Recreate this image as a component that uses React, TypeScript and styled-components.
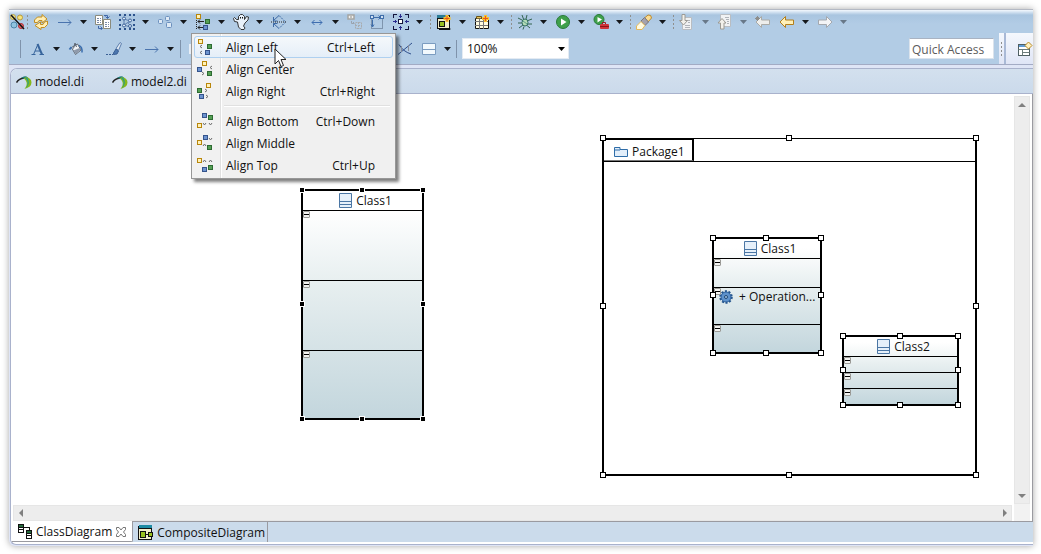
import React, { ReactNode } from 'react';
import styled, { createGlobalStyle, css } from 'styled-components';

const GlobalStyle = createGlobalStyle`
  *, *::before, *::after { box-sizing: border-box; }
  body {
    margin: 0;
    background: #fff;
    color: #111;
    font: 12px/16px "Open Sans", "Noto Sans", sans-serif;
  }
  button, input, select { font: inherit; color: inherit; }
`;

/* ---------- window frame ---------- */

const Page = styled.div`
  display: flex;
  min-height: 100vh;
  padding: 9px 8px 8px 9px;
`;

const Window = styled.main`
  flex: 1;
  min-width: 0;
  display: flex;
  flex-direction: column;
  background: #dfe5f6;
  border-top: 1px solid #b4b9c4;
  border-radius: 0 0 0 6px;
  box-shadow: 0 0 7px rgba(0, 0, 0, 0.35);
`;

/* ---------- toolbars ---------- */

const Toolbars = styled.header`
  background: linear-gradient(#f4f8fc 0, #e4eef8 1px, #a9c5e0 5px, #b2cce5 14px, #b2cce5 100%);
  border-bottom: 1px solid #a3abc4;
`;

const ToolRow = styled.div<{ $height: number }>`
  display: flex;
  align-items: center;
  height: ${p => p.$height}px;
`;

const ToolButton = styled.button<{ $width?: number; $spaced?: boolean }>`
  display: flex;
  flex: none;
  align-items: center;
  justify-content: center;
  width: ${p => p.$width ?? 22}px;
  height: 22px;
  margin: 0;
  margin-right: ${p => (p.$spaced ? 2 : 0)}px;
  padding: 0;
  border: 0;
  background: none;
  overflow: hidden;
`;

const DropButton = styled(ToolButton)`
  width: 16px;
  padding-right: 2px;
`;

const MenuAnchor = styled.div`
  position: relative;
  display: flex;
  flex: none;
`;

const Grip = styled.span`
  flex: none;
  width: 5px;
  height: 14px;
  background: repeating-linear-gradient(#8f8f8d 0 2px, transparent 2px 4px) 2px 0 / 1px 100% no-repeat;
`;

const Bar = styled.span<{ $before: number; $after: number }>`
  flex: none;
  width: 1px;
  height: 18px;
  margin: 0 ${p => p.$after}px 0 ${p => p.$before}px;
  background: #7f93ab;
`;

const Spacer = styled.span`
  flex: 1;
`;

const HiddenTools = styled.span`
  flex: none;
  width: 205px;
  height: 10px;
  margin-left: 8px;
  border-left: 3px solid #e8eef6;
`;

const ZoomBox = styled.label`
  position: relative;
  display: flex;
  flex: none;
  width: 107px;
  height: 21px;
  background: #fff;

  svg {
    position: absolute;
    right: 4px;
    top: 9px;
    pointer-events: none;
  }
`;

const ZoomSelect = styled.select`
  appearance: none;
  width: 100%;
  padding: 1px 4px 0;
  border: 1px solid #e4ebf3;
  border-radius: 0;
  background: none;
`;

const QuickAccess = styled.input`
  width: 85px;
  height: 21px;
  margin-right: 5px;
  padding: 1px 2px 0;
  border: 1px solid #dbe3ec;
  border-top-color: #a9b3c2;
  background: #fff;

  &::placeholder {
    color: #5c5c5c;
    opacity: 1;
  }
`;

const Perspective = styled.div`
  display: flex;
  align-items: center;
  align-self: stretch;
  width: 34px;
  background: linear-gradient(#f5f8fd, #dfe5f6);
  overflow: hidden;
`;

const PerspectiveEdge = styled.span`
  flex: none;
  align-self: stretch;
  width: 2px;
  margin-right: 8px;
  background: #a9b9d6;
`;

/* ---------- menu ---------- */

const Menu = styled.div`
  position: absolute;
  z-index: 5;
  left: -1px;
  top: 22px;
  width: 205px;
  padding: 2px;
  border: 1px solid #979797;
  background: linear-gradient(90deg, #f1f1f1 28px, #e0e0e0 28px 29px, #fff 29px 30px, #f0f0f0 30px);
  box-shadow: 3px 3px 3px rgba(0, 0, 0, 0.5);
`;

const MenuItem = styled.button<{ $active?: boolean }>`
  display: flex;
  align-items: center;
  width: 100%;
  height: 22px;
  padding: 0 17px 0 2px;
  border: 1px solid transparent;
  border-radius: 3px;
  background: none;
  text-align: left;
  white-space: nowrap;

  ${p =>
    p.$active &&
    css`
      border-color: #aed0f0;
      background: linear-gradient(rgba(246, 250, 254, 0.8), rgba(226, 238, 250, 0.8));
    `}
`;

const MenuText = styled.span`
  padding-top: 2px;
`;

const MenuLabel = styled(MenuText)`
  flex: 1;
  margin-left: 13px;
`;

const MenuRule = styled.hr`
  height: 2px;
  margin: 3px 3px 3px 30px;
  border: 0;
  border-top: 1px solid #e0e0e0;
  background: #fff;
`;

const Pointer = styled.svg`
  position: absolute;
  left: 82px;
  top: 14px;
`;

/* ---------- editor ---------- */

const Editor = styled.section`
  flex: 1;
  display: flex;
  flex-direction: column;
  margin: 3px 0 1px 1px;
  border: 1px solid #a9b2cc;
  border-right: 0;
  border-radius: 7px 0 0 6px;
  background: #fff;
  overflow: hidden;
`;

const FileTabs = styled.nav`
  display: flex;
  gap: 28px;
  height: 25px;
  padding-left: 5px;
  background: linear-gradient(#d3e0ee, #cbdaeb);
  border-bottom: 1px solid #a9b2cc;
`;

const FileTab = styled.button`
  display: flex;
  align-items: center;
  gap: 3px;
  padding: 2px 0 0;
  border: 0;
  background: none;
`;

const Surface = styled.div`
  flex: 1;
  display: grid;
  grid-template: 1fr 17px / 1fr 16px;
  padding-right: 2px;
  border-right: 1px solid #9a9aa0;
`;

const Canvas = styled.div`
  position: relative;
  min-height: 400px;
`;

const ScrollTrack = styled.div<{ $vertical?: boolean }>`
  display: flex;
  flex-direction: ${p => (p.$vertical ? 'column' : 'row')};
  align-items: center;
  justify-content: space-between;
  margin: ${p => (p.$vertical ? '2px 0 0' : '1px 2px 0 2px')};
  padding: ${p => (p.$vertical ? '4px 0 3px' : '0 2px 0 3px')};
  border: 1px solid #e6e6e6;
  background: #ededed;
`;

const ScrollCorner = styled.div`
  background: #f2f2f2;
`;

const DiagramTabs = styled.nav`
  display: flex;
  height: 21px;
  margin-bottom: 2px;
  background: #cbdbeb;
  border-top: 1px solid #9a9aa0;
`;

const DiagramTab = styled.button<{ $active?: boolean }>`
  display: flex;
  align-items: center;
  gap: ${p => (p.$active ? 3 : 4)}px;
  margin-top: ${p => (p.$active ? -1 : 0)}px;
  padding: 1px ${p => (p.$active ? 5 : 2)}px 0 ${p => (p.$active ? 6 : 5)}px;
  border: 0;
  border-right: 1px solid #9a9aa0;
  border-bottom: ${p => (p.$active ? '1px solid #9a9aa0' : '0')};
  border-radius: 0 0 ${p => (p.$active ? '2px 0' : '0 0')};
  background: ${p => (p.$active ? '#fff' : 'none')};
`;

/* ---------- diagram nodes ---------- */

type Box = { x: number; y: number; w: number; h: number };

const NodeBox = styled.article<{ $box: Box; $plain?: boolean }>`
  position: absolute;
  left: ${p => p.$box.x}px;
  top: ${p => p.$box.y}px;
  width: ${p => p.$box.w}px;
  height: ${p => p.$box.h}px;
  display: flex;
  flex-direction: column;
  border: 2px solid #000;
  border-top-width: ${p => (p.$plain ? 1 : 2)}px;
  background: ${p => (p.$plain ? 'none' : 'linear-gradient(#fff 8%, #e6eeef 42%, #c3d6dd)')};
`;

const NodeTitle = styled.h2`
  display: flex;
  flex: none;
  align-items: center;
  justify-content: center;
  gap: 4px;
  height: 19px;
  margin: 0;
  padding-left: 6px;
  font-size: 12px;
  font-weight: 400;
`;

const Compartment = styled.div<{ $grow: number }>`
  position: relative;
  display: flex;
  flex: ${p => p.$grow} 1 0;
  align-items: flex-start;
  min-height: 0;
  border-top: 1px solid #000;
`;

const Collapse = styled.button`
  position: absolute;
  left: 0;
  top: 0;
  width: 7px;
  height: 7px;
  padding: 0;
  border: 1px solid #9a9a96;
  border-radius: 1px;
  background: linear-gradient(#000, #000) 0 2px / 5px 1px no-repeat #f2f2f0;
`;

const Operation = styled.div`
  display: flex;
  align-items: center;
  gap: 6px;
  padding: 1px 0 0 5px;
  white-space: nowrap;
`;

const PackageHead = styled.div`
  height: 23px;
  border-bottom: 1px solid #000;
`;

const PackageTab = styled.div`
  display: flex;
  align-items: center;
  gap: 4px;
  width: 90px;
  height: 22px;
  padding: 4px 0 0 10px;
  border: solid #000;
  border-width: 1px 2px 1px 0;
  border-bottom-color: #777;
`;

const Handle = styled.i<{ $h: number; $v: number; $solid?: boolean }>`
  position: absolute;
  z-index: 1;
  left: ${p => (p.$h === 0 ? '-1px' : p.$h === 1 ? 'calc(50% - 1px)' : 'calc(100% + 1px)')};
  top: ${p => (p.$v === 0 ? '-1px' : p.$v === 1 ? 'calc(50% - 1px)' : 'calc(100% + 1px)')};
  width: 6px;
  height: 6px;
  margin: -3px;
  border: 1px solid ${p => (p.$solid ? '#fff' : '#000')};
  background: ${p => (p.$solid ? '#000' : '#fff')};
`;

const spots = [[0, 0], [1, 0], [2, 0], [0, 1], [2, 1], [0, 2], [1, 2], [2, 2]];

const Handles = ({ solid }: { solid?: boolean }) => (
  <>
    {spots.map(([h, v]) => (
      <Handle key={`${h}${v}`} $h={h} $v={v} $solid={solid} />
    ))}
  </>
);

/* ---------- icons ---------- */

const Drawing = styled.svg`
  flex: none;
`;

const Icon = ({ w = 16, h = 16, crisp, children }: { w?: number; h?: number; crisp?: boolean; children: ReactNode }) => (
  <Drawing
    width={w}
    height={h}
    viewBox={`0 0 ${w} ${h}`}
    fill="none"
    shapeRendering={crisp ? 'crispEdges' : undefined}
    aria-hidden="true"
  >
    {children}
  </Drawing>
);

const tones: Record<string, [string, string]> = {
  y: ['#b8860b', '#fff1b8'],
  g: ['#2d6b33', '#55a054'],
  b: ['#35548c', '#6c93cf'],
};

const Square = ({ x, y, tone }: { x: number; y: number; tone: string }) => (
  <rect x={x + 0.5} y={y + 0.5} width="4" height="4" stroke={tones[tone][0]} fill={tones[tone][1]} />
);

const chevrons: Record<string, string> = {
  l: 'l-2 1.5 l2 1.5',
  r: 'l2 1.5 l-2 1.5',
  d: 'l1.5 2 l1.5 -2',
  u: 'l1.5 -2 l1.5 2',
};

type AlignSpec = { squares: [string, number, number][]; marks: [string, number, number][] };

const AlignIcon = ({ squares, marks }: AlignSpec) => (
  <Icon>
    {squares.map(([tone, x, y]) => (
      <Square key={tone} tone={tone} x={x} y={y} />
    ))}
    {marks.map(([dir, x, y], i) => (
      <path key={i} d={`M${x} ${y}${chevrons[dir]}`} stroke="#6d6d6d" />
    ))}
  </Icon>
);

const Arrow = ({ color = '#15181c' }: { color?: string }) => (
  <Icon w={7} h={4}>
    <path d="M0 0h7L3.5 4z" fill={color} />
  </Icon>
);

const FilterIcon = () => (
  <Icon>
    <circle cx="4" cy="3" r="2.500" fill="#efe28c" stroke="#b9a64c" />
    <circle cx="11" cy="3.500" r="2.500" fill="#f6e47a" stroke="#b99b3c" />
    <circle cx="5" cy="11" r="3" fill="#8fc3df" stroke="#4c84a8" />
    <circle cx="12" cy="12" r="2.500" fill="#e4646a" stroke="#b03038" />
    <path d="M2 1l13 14" stroke="#111" strokeWidth="1.500" />
  </Icon>
);

const SyncIcon = () => (
  <Icon>
    <path d="M1.500 8.500V6l3-3H9V.500L14 5l-5 4V6.500H6L4.500 8.500z" fill="#ffeeb4" stroke="#c28e1e" strokeLinejoin="round" />
    <path d="M14.500 7v3.500l-3 3H8v2L2 11.500 7.500 8v2.500H10L11.500 8z" fill="#ffeeb4" stroke="#c28e1e" strokeLinejoin="round" />
  </Icon>
);

const LineArrowIcon = () => (
  <Icon>
    <path d="M1 8.500h13M11 5.500l3 3-3 3" stroke="#4a74ae" />
  </Icon>
);

const PagesIcon = () => (
  <Icon>
    <path d="M.5 1.500h7v9h-7zM8.500 5.500h7v9h-7z" fill="#fff" stroke="#8b8b7c" />
    <path d="M2 4.500h4M2 6.500h4M2 8.500h4M10 8.500h4M10 10.500h4M10 12.500h4" stroke="#7a8ba8" strokeDasharray="2 1" />
    <path d="M9 1.500h3.500V4M10.500 2.500l2 2 2-2M3.500 12v2.500H7M5.500 12.500l2 2-2 1.500" stroke="#3f66a8" />
  </Icon>
);

const NetworkIcon = () => (
  <Icon>
    <path d="M0 0h2v2H0zM5 0h2v2H5zM10 0h2v2h-2zM14 0h2v2h-2zM0 14h2v2H0zM5 14h2v2H5zM10 14h2v2h-2zM14 14h2v2h-2zM0 5h2v2H0zM0 10h2v2H0zM14 5h2v2h-2zM14 10h2v2h-2z" fill="#2c528c" />
    <path d="M5 5l6 2-6 4 6 2M5 5v6M11 7l-2 3" stroke="#5d7fae" />
    <circle cx="5" cy="4.500" r="1.500" fill="#dce8f5" stroke="#3e659c" />
    <circle cx="11" cy="6.500" r="1.500" fill="#dce8f5" stroke="#3e659c" />
    <circle cx="5" cy="11.500" r="1.500" fill="#dce8f5" stroke="#3e659c" />
    <circle cx="11" cy="12" r="1.500" fill="#dce8f5" stroke="#3e659c" />
  </Icon>
);

const ShapesIcon = () => (
  <Icon>
    <rect x="1.500" y="5.500" width="4" height="4" rx="1" fill="#dde9f5" stroke="#6a8fbd" />
    <rect x="8.500" y="2.500" width="4" height="4" rx="1" fill="#dde9f5" stroke="#6a8fbd" />
    <rect x="9.500" y="8.500" width="5" height="5" rx="1" fill="#dde9f5" stroke="#6a8fbd" />
  </Icon>
);

const AlignToolIcon = () => (
  <Icon>
    <Square tone="y" x={1} y={0} />
    <Square tone="g" x={10} y={5} />
    <Square tone="b" x={8} y={11} />
    <path d="M1.500 6v10" stroke="#222" strokeDasharray="1 1" />
    <path d="M3 7.500h6M5 5.500l-2 2 2 2M3 13.500h5M5 11.500l-2 2 2 2" stroke="#222" />
  </Icon>
);

const GhostIcon = () => (
  <Icon>
    <path
      d="M5.500 5.500V2.500l2-2h2l2 2v3l2-3 2 .500-.500 3L12 9l-1.500 3 1.500 2-1 1.500H8L5.500 13l-1-5L1.500 7.500.500 4.500l1-1 2 2z"
      fill="#e8f1fa"
      stroke="#222"
      strokeWidth=".9"
    />
    <path d="M7.500 3v1.500M9.500 3v1.500" stroke="#111" />
  </Icon>
);

const DiamondIcon = () => (
  <Icon>
    <path d="M8 1.500L14.500 8 8 14.500" stroke="#3d6aa5" strokeDasharray="2 1" />
    <path d="M8 1.500L2.500 6.500M8 14.500l-5.500-5" stroke="#3d6aa5" />
    <path d="M2.500 3v4h4M2.500 13V9.500h4" stroke="#3d6aa5" />
    <path d="M0 8h15" stroke="#222" strokeDasharray="1 1" />
  </Icon>
);

const DoubleArrowIcon = () => (
  <Icon>
    <path d="M3 8.500h10M5.500 6L3 8.500 5.500 11M10.500 6L13 8.500 10.500 11" stroke="#3f6eb0" />
  </Icon>
);

const DimBoxesIcon = () => (
  <Icon>
    <rect x="1" y="1" width="6" height="4" fill="#f0f0ee" stroke="#a5a5a2" strokeWidth="1.500" />
    <path d="M3 3h2" stroke="#8c8c8a" />
    <path d="M4.500 7v2.500H7M6 8l1.500 1.500" stroke="#9aa3ae" />
    <path d="M8.500 8.500h6v6h-6zM11.500 8v7M8 11.500h7" stroke="#a8acb0" strokeDasharray="2 1" />
  </Icon>
);

const ResizeIcon = () => (
  <Icon w={14}>
    <rect x="1.500" y="3.500" width="11" height="11" stroke="#4d5f76" strokeDasharray="1 1" />
    <path d="M2.500 13V5.500M4 3.500h6M8.500 1.500l2 2-2 2M1 10.500l1.500 2.500L4 10.500" stroke="#3f6eaa" />
    <rect x=".5" y="1.500" width="3" height="3" fill="#cfe0f2" stroke="#3f6eaa" />
    <rect x="10.500" y="1.500" width="3" height="3" fill="#cfe0f2" stroke="#3f6eaa" />
  </Icon>
);

const SnapIcon = () => (
  <Icon crisp>
    <path d="M.5 4V.5H4M12 .5h3.500V4M15.500 12v3.500H12M4 15.500H.5V12" stroke="#15153c" />
    <rect x="5.500" y="5.500" width="4" height="4" fill="#fff" stroke="#15153c" />
    <path d="M7.500 0v4M7.500 12v4M0 7.500h4M12 7.500h4M6 2.500h3M6 13.500h3M2.500 6v3M13.500 6v3" stroke="#28288c" />
  </Icon>
);

const NewModelIcon = () => (
  <Icon>
    <rect x="1.500" y="1.500" width="12" height="13" fill="#f5f0c8" stroke="#111" />
    <rect x="1" y="1" width="9" height="3" fill="#2b7d96" />
    <path d="M1 4.500h9M14 14.500v1H3" stroke="#111" />
    <rect x="3.500" y="7.500" width="5" height="5" fill="#98c020" stroke="#111" />
    <path d="M11 1v7M7.500 4.500h7" stroke="#f9c32c" strokeWidth="3" />
    <path d="M11 2v5M8.500 4.500h5" stroke="#e8541c" />
  </Icon>
);

const NewTableIcon = () => (
  <Icon>
    <path d="M1.500 4.500h13v10h-13z" fill="#fffbe0" stroke="#111" />
    <path d="M2.500 4.500v-2h5v2" fill="#e6c25a" stroke="#6a5518" />
    <path d="M1 7.500h13M1 11.500h13M5.500 5v10M9.500 5v10" stroke="#777" />
    <path d="M11.500 1v7M8 4.500h7" stroke="#f9c32c" strokeWidth="3" />
    <path d="M11.500 2v5M9 4.500h5" stroke="#e8541c" />
  </Icon>
);

const BugIcon = () => (
  <Icon>
    <path d="M1 4l4 2M5 1l1.500 4M10 1L9 5M15 5l-4 1.500M1 9h4M15 10h-4M2 14l4-3M6 15.500l1-3M13 14l-3-2.500" stroke="#33634f" />
    <ellipse cx="8" cy="8.500" rx="3" ry="3.500" fill="#b5dcb6" stroke="#2f6b62" />
    <path d="M6 7l4 3" stroke="#5fa08c" />
  </Icon>
);

const RunIcon = () => (
  <Icon>
    <circle cx="8" cy="8" r="6.500" fill="#3fa04b" stroke="#2a7a3a" />
    <path d="M6 4.500L11.500 8 6 11.500z" fill="#fff" />
  </Icon>
);

const RunToolIcon = () => (
  <Icon>
    <circle cx="6" cy="5.500" r="5" fill="#3fa04b" stroke="#2a7a3a" />
    <path d="M4.500 3L9 5.500l-4.500 3z" fill="#fff" />
    <path d="M9.500 10V8.500h3V10" stroke="#9b1c20" />
    <rect x="7" y="10" width="9" height="5" rx="1" fill="#d0343a" />
    <path d="M7 12.500h9" stroke="#8e1519" />
  </Icon>
);

const TorchIcon = () => (
  <Icon>
    <path d="M8.500 4l3.500-3q3.500-.5 3.500 3L12 8z" fill="#fbdc92" stroke="#b9882c" />
    <path d="M5 7l3.500-3.500L12.500 8 9 11.500z" fill="#a5a2ac" stroke="#77747e" />
    <path d="M.5 12L5 7.500l4 4-3 4H.5z" fill="#fffbe2" stroke="#e3b85a" />
  </Icon>
);

const DimPageIcon = ({ up }: { up?: boolean }) => (
  <Icon>
    {up ? (
      <>
        <path d="M3.500.5h10v12h-10z" fill="#f1f2f3" stroke="#b9bdc2" />
        <path d="M8 3.500h4M9 5.500h3M10 7.500h2M10 9.500h2" stroke="#b0b4ba" />
        <path d="M5 4.500L9 9H7v6H3.500V9H1z" fill="#f2f0ea" stroke="#9c9a94" />
      </>
    ) : (
      <>
        <path d="M3.500 3.500h9v12h-9z" fill="#f1f2f3" stroke="#b9bdc2" />
        <path d="M8 6.500h3M9 8.500h2M6 11.500h5M6 13.500h5" stroke="#b0b4ba" />
        <path d="M3 .5h3v6h2.500L4.500 11 .5 6.500H3z" fill="#f2f0ea" stroke="#9c9a94" />
      </>
    )}
  </Icon>
);

const BlockArrow = ({ fill, stroke, flip, star }: { fill: string; stroke: string; flip?: boolean; star?: boolean }) => (
  <Icon>
    <path
      d="M1 8l5.500-5.500V6h8v4.500h-8v3z"
      transform={flip ? 'matrix(-1 0 0 1 16 0)' : undefined}
      fill={fill}
      stroke={stroke}
      strokeLinejoin="round"
    />
    {star && <path d="M2.500 2v5M0 4.500h5M1 3l3 3M4 3L1 6" stroke="#8e8e8c" />}
  </Icon>
);

const FontIcon = () => (
  <Icon>
    <path d="M3.500 13.500L8 3M5 10h5.500M1.500 13.500h4M9.500 13.500H14" stroke="#38659c" />
    <path d="M7.500 3l4.500 10.500" stroke="#38659c" strokeWidth="2" />
  </Icon>
);

const BucketIcon = () => (
  <Icon>
    <path d="M3.500 6.500l6-3.500 3.500 6-5.500 4.500z" fill="#f0f3f7" stroke="#5c6673" />
    <path d="M7.500 13l5-4-1-2L5.500 9.500z" fill="#8e9aab" />
    <path d="M5.500 7.500L7 2l1.500 4" stroke="#5c6673" />
    <path d="M11 4.500q3.500 1.500 3 7" stroke="#3c6ead" strokeWidth="1.500" />
    <path d="M1.500 8.500l2-2.500" stroke="#3c6ead" strokeWidth="2" />
  </Icon>
);

const BrushIcon = () => (
  <Icon>
    <path d="M10 7.500l4-6 1.500 1-3 7z" fill="#dfe8f2" stroke="#5d7fae" />
    <path d="M7.500 12L10 8l2.500 2-1.500 3-3.500.5z" fill="#4c77b0" stroke="#3a5f94" />
    <path d="M0 13.500h7" stroke="#3a5f94" strokeDasharray="2 1" />
  </Icon>
);

const RouteIcon = () => (
  <Icon>
    <path d="M1 13.500L15 2M2 3.500q4 7 12 9.500" stroke="#2f4f8c" />
    <path d="M4.500 5v6M11.500 4v6" stroke="#8a8f9c" />
  </Icon>
);

const SplitIcon = () => (
  <Icon w={14} h={14}>
    <path d="M.5 1.500h13v11H.5z" fill="#f2f9fd" stroke="#7b9cc0" />
    <path d="M1 7.500h12" stroke="#7b9cc0" />
  </Icon>
);

const PerspectiveIcon = () => (
  <Icon>
    <rect x="1.500" y="3.500" width="11" height="11" fill="#fff" stroke="#4f5f62" />
    <path d="M2 5h7" stroke="#5f9cd8" strokeWidth="2" />
    <path d="M1.500 8.500h11M5.500 8.500v6M5.500 11.500h7" stroke="#6c7d7c" />
    <path d="M11.500 1l3.500 3.500L11.500 8 8 4.500z" fill="#fff1c0" stroke="#b98a24" />
  </Icon>
);

const PapyrusIcon = () => (
  <Icon>
    <path d="M.5 8.500Q3 4.500 8 4" stroke="#222" strokeWidth="1.500" />
    <path d="M5 4q4-3 7-.5l-2 2q-2-1.500-5-1.500z" fill="#1c7a78" />
    <path d="M10 3q5.500 1 5.500 5.500T8.500 15q3-4 2-7T7.500 4.500z" fill="#86b81c" />
    <path d="M9 4q5 3 1 10.500 5-6 1-11z" fill="#1f9b93" />
  </Icon>
);

const ClassIcon = () => (
  <Icon w={13} h={15}>
    <path d="M.5.5h12v14H.5z" fill="#e6f0fa" stroke="#4b76a4" />
    <path d="M1 8.500h11M1 11.500h11" stroke="#4b76a4" />
  </Icon>
);

const FolderIcon = () => (
  <Icon w={14} h={11}>
    <path d="M.5 9.500v-9H6v2h7.500v7z" fill="#e2eefa" stroke="#2f6da8" />
    <path d="M.5 3H6" stroke="#2f6da8" />
  </Icon>
);

const GearIcon = () => (
  <Icon w={14} h={14}>
    <circle cx="7" cy="7" r="5.500" stroke="#24548c" strokeWidth="2.500" strokeDasharray="2 1.455" />
    <circle cx="7" cy="7" r="5" fill="#5e92cc" stroke="#2c5f9c" />
    <circle cx="7" cy="7" r="1.500" fill="#a9cbea" stroke="#1f4672" />
  </Icon>
);

const ClassDiagramIcon = () => (
  <Icon w={16} h={15} crisp>
    <path d="M7 3.500h5.500V6" stroke="#111" />
    <path d="M1.500.5h5v8h-5zM9.500 6.500h5v8h-5z" fill="#fff" stroke="#111" />
    <path d="M2 2h4M10 8h4" stroke="#246b3c" strokeWidth="2" />
    <path d="M2 3.500h4M2 5.500h4M10 9.500h4M10 11.500h4" stroke="#111" />
  </Icon>
);

const CompositeIcon = () => (
  <Icon w={15} h={16} crisp>
    <rect x=".5" y="1.500" width="13" height="13" fill="#f4f0cc" stroke="#111" />
    <rect x="1" y="0" width="13" height="3" fill="#1d8ba4" />
    <path d="M0 3.500h14" stroke="#111" />
    <rect x="2.500" y="6.500" width="5" height="6" fill="#97c11f" stroke="#111" />
    <path d="M8 9.500h3" stroke="#111" />
    <rect x="10.500" y="7.500" width="4" height="4" fill="#97c11f" stroke="#111" />
  </Icon>
);

const CloseIcon = () => (
  <Icon w={12} h={12}>
    <path d="M1.500 1.500h2.500l2 2.500 2-2.500h2.500v2L8.500 6l2 2.500v2H8L6 8l-2 2.500H1.500v-2L3.500 6l-2-2.500z" fill="#fff" stroke="#777" />
  </Icon>
);

const ScrollArrow = ({ d }: { d: string }) => (
  <Icon w={8} h={8}>
    <path d={d} fill="#808080" />
  </Icon>
);

/* ---------- pieces ---------- */

type ToolProps = { label: string; icon: ReactNode; drop?: boolean; dim?: boolean; tight?: boolean };

const Tool = ({ label, icon, drop, dim, tight }: ToolProps) => (
  <>
    <ToolButton aria-label={label} $spaced={!drop && !tight}>
      {icon}
    </ToolButton>
    {drop && (
      <DropButton aria-label={`${label} options`}>
        <Arrow color={dim ? '#687888' : undefined} />
      </DropButton>
    )}
  </>
);

type Entry = { label: string; keys?: string; icon: AlignSpec };

const horizontal: Entry[] = [
  {
    label: 'Align Left',
    keys: 'Ctrl+Left',
    icon: { squares: [['y', 1, 0], ['g', 10, 5], ['b', 8, 11]], marks: [['l', 5, 6], ['l', 5, 12]] },
  },
  {
    label: 'Align Center',
    icon: { squares: [['y', 5, 0], ['b', 0, 6], ['g', 10, 10]], marks: [['r', 5, 11], ['l', 15, 5]] },
  },
  {
    label: 'Align Right',
    keys: 'Ctrl+Right',
    icon: { squares: [['y', 9, 0], ['g', 0, 5], ['b', 2, 11]], marks: [['r', 8, 6], ['r', 9, 12]] },
  },
];

const vertical: Entry[] = [
  {
    label: 'Align Bottom',
    keys: 'Ctrl+Down',
    icon: { squares: [['b', 5, 0], ['g', 11, 2], ['y', 0, 10]], marks: [['d', 6, 10], ['d', 12, 10]] },
  },
  {
    label: 'Align Middle',
    icon: { squares: [['b', 6, 0], ['y', 0, 5], ['g', 10, 10]], marks: [['d', 12, 3], ['u', 6, 11]] },
  },
  {
    label: 'Align Top',
    keys: 'Ctrl+Up',
    icon: { squares: [['y', 0, 1], ['b', 5, 10], ['g', 11, 8]], marks: [['u', 6, 5], ['u', 12, 5]] },
  },
];

const Entries = ({ items, active }: { items: Entry[]; active?: string }) => (
  <>
    {items.map(item => (
      <MenuItem key={item.label} role="menuitem" $active={item.label === active}>
        <AlignIcon {...item.icon} />
        <MenuLabel>{item.label}</MenuLabel>
        {item.keys && <MenuText>{item.keys}</MenuText>}
      </MenuItem>
    ))}
  </>
);

const AlignMenu = () => (
  <Menu role="menu">
    <Entries items={horizontal} active="Align Left" />
    <MenuRule />
    <Entries items={vertical} />
    <Pointer width="13" height="20" viewBox="0 0 13 20" aria-hidden="true">
      <path d="M1 1v15l3.500-3.500L7 18.500l2.500-1L7 11.500h5z" fill="#fff" stroke="#222" />
    </Pointer>
  </Menu>
);

type ClassProps = { name: string; box: Box; rows: number[]; solid?: boolean; operation?: string };

const ClassNode = ({ name, box, rows, solid, operation }: ClassProps) => (
  <NodeBox $box={box}>
    <NodeTitle>
      <ClassIcon />
      {name}
    </NodeTitle>
    {rows.map((grow, i) => (
      <Compartment key={i} $grow={grow}>
        <Collapse aria-label="Collapse compartment" />
        {operation && i === 1 && (
          <Operation>
            <GearIcon />
            <span>{operation}</span>
          </Operation>
        )}
      </Compartment>
    ))}
    <Handles solid={solid} />
  </NodeBox>
);

export default function App() {
  return (
    <Page>
      <GlobalStyle />
      <Window>
        <Toolbars>
          <ToolRow $height={23}>
            <ToolButton aria-label="Filters" $width={16}>
              <FilterIcon />
            </ToolButton>
            <Grip />
            <Tool label="Synchronize" icon={<SyncIcon />} />
            <Tool label="Line style" icon={<LineArrowIcon />} drop />
            <Tool label="Copy appearance" icon={<PagesIcon />} />
            <Tool label="Select" icon={<NetworkIcon />} drop />
            <Tool label="Arrange" icon={<ShapesIcon />} drop />
            <MenuAnchor>
              <Tool label="Align" icon={<AlignToolIcon />} drop />
              <AlignMenu />
            </MenuAnchor>
            <Tool label="Show or hide" icon={<GhostIcon />} drop />
            <Tool label="Order" icon={<DiamondIcon />} drop />
            <Tool label="Distribute" icon={<DoubleArrowIcon />} drop />
            <Tool label="Same size" icon={<DimBoxesIcon />} tight />
            <Tool label="Auto size" icon={<ResizeIcon />} />
            <Tool label="Snap" icon={<SnapIcon />} drop />
            <Grip />
            <Tool label="New diagram" icon={<NewModelIcon />} drop />
            <Tool label="New table" icon={<NewTableIcon />} drop />
            <Grip />
            <Tool label="Debug" icon={<BugIcon />} drop />
            <Tool label="Run" icon={<RunIcon />} drop />
            <Tool label="External tools" icon={<RunToolIcon />} drop />
            <Grip />
            <Tool label="Search" icon={<TorchIcon />} drop />
            <Grip />
            <Tool label="Next annotation" icon={<DimPageIcon />} drop dim />
            <Tool label="Previous annotation" icon={<DimPageIcon up />} drop dim />
            <Tool label="Last edit location" icon={<BlockArrow fill="#eeeeec" stroke="#aaaaa6" star />} />
            <Tool label="Back" icon={<BlockArrow fill="#fff0b8" stroke="#b37f1c" />} drop />
            <Tool label="Forward" icon={<BlockArrow fill="#f3f4f6" stroke="#a4a8ae" flip />} drop dim />
          </ToolRow>
          <ToolRow $height={31}>
            <Bar $before={11} $after={6} />
            <Tool label="Font" icon={<FontIcon />} drop />
            <Tool label="Fill color" icon={<BucketIcon />} drop />
            <Tool label="Line color" icon={<BrushIcon />} drop />
            <Tool label="Connector" icon={<LineArrowIcon />} drop />
            <Bar $before={1} $after={0} />
            <HiddenTools />
            <Tool label="Router" icon={<RouteIcon />} />
            <Tool label="Compartments" icon={<SplitIcon />} drop />
            <Bar $before={0} $after={5} />
            <ZoomBox>
              <ZoomSelect aria-label="Zoom" defaultValue="100%">
                <option>100%</option>
              </ZoomSelect>
              <Arrow color="#000" />
            </ZoomBox>
            <Spacer />
            <QuickAccess aria-label="Quick Access" placeholder="Quick Access" />
            <Perspective>
              <Grip />
              <PerspectiveEdge />
              <ToolButton aria-label="Open perspective">
                <PerspectiveIcon />
              </ToolButton>
            </Perspective>
          </ToolRow>
        </Toolbars>

        <Editor>
          <FileTabs>
            <FileTab>
              <PapyrusIcon />
              model.di
            </FileTab>
            <FileTab>
              <PapyrusIcon />
              model2.di
            </FileTab>
          </FileTabs>
          <Surface>
            <Canvas>
              <ClassNode name="Class1" box={{ x: 290, y: 95, w: 123, h: 231 }} rows={[70, 70, 68]} solid />
              <NodeBox $box={{ x: 591, y: 44, w: 375, h: 338 }} $plain>
                <PackageHead>
                  <PackageTab>
                    <FolderIcon />
                    Package1
                  </PackageTab>
                </PackageHead>
                <Handles />
              </NodeBox>
              <ClassNode
                name="Class1"
                box={{ x: 701, y: 143, w: 110, h: 117 }}
                rows={[29, 37, 28]}
                operation="+ Operation..."
              />
              <ClassNode name="Class2" box={{ x: 831, y: 241, w: 117, h: 71 }} rows={[16, 16, 16]} />
            </Canvas>
            <ScrollTrack $vertical>
              <ScrollArrow d="M0 6h8L4 2z" />
              <ScrollArrow d="M0 2h8L4 6z" />
            </ScrollTrack>
            <ScrollTrack>
              <ScrollArrow d="M6 0v8L2 4z" />
              <ScrollArrow d="M2 0v8l4-4z" />
            </ScrollTrack>
            <ScrollCorner />
          </Surface>
          <DiagramTabs>
            <DiagramTab $active>
              <ClassDiagramIcon />
              ClassDiagram
              <CloseIcon />
            </DiagramTab>
            <DiagramTab>
              <CompositeIcon />
              CompositeDiagram
            </DiagramTab>
          </DiagramTabs>
        </Editor>
      </Window>
    </Page>
  );
}
